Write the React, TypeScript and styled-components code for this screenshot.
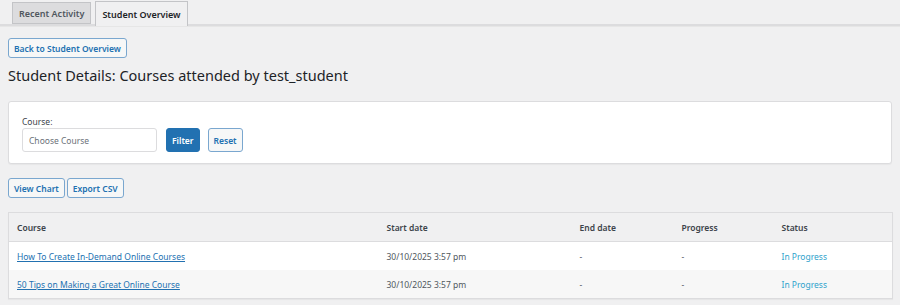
import styled, { createGlobalStyle } from "styled-components";

const GlobalStyle = createGlobalStyle`
  html, body {
    margin: 0;
    padding: 0;
    background: #f0f0f1;
  }
  body {
    font-family: "Noto Sans", "Open Sans", sans-serif;
    font-size: 8.5px;
    color: #3c434a;
  }
`;

const courses = [
  { title: "How To Create In-Demand Online Courses", start: "30/10/2025 3:57 pm" },
  { title: "50 Tips on Making a Great Online Course", start: "30/10/2025 3:57 pm" },
];

export default function App() {
  return (
    <>
      <GlobalStyle />
      <Page>
        <TabBar>
          <Tab>Recent Activity</Tab>
          <Tab $active>Student Overview</Tab>
        </TabBar>

        <Content>
          <div>
            <OutlineButton>Back to Student Overview</OutlineButton>
          </div>
          <Heading>Student Details: Courses attended by test_student</Heading>

          <Card>
            <Label>Course:</Label>
            <FilterRow>
              <Select>Choose Course</Select>
              <PrimaryButton>Filter</PrimaryButton>
              <OutlineButton $tall>Reset</OutlineButton>
            </FilterRow>
          </Card>

          <Actions>
            <OutlineButton>View Chart</OutlineButton>
            <OutlineButton>Export CSV</OutlineButton>
          </Actions>

          <Table>
            <colgroup>
              <col style={{ width: 370 }} />
              <col style={{ width: 193 }} />
              <col style={{ width: 102 }} />
              <col style={{ width: 100 }} />
              <col />
            </colgroup>
            <thead>
              <tr>
                <Th>Course</Th>
                <Th>Start date</Th>
                <Th>End date</Th>
                <Th>Progress</Th>
                <Th>Status</Th>
              </tr>
            </thead>
            <tbody>
              {courses.map((c, i) => (
                <Row key={c.title} $striped={i % 2 === 1}>
                  <Td>
                    <CourseLink href="#">{c.title}</CourseLink>
                  </Td>
                  <Td>{c.start}</Td>
                  <Td>-</Td>
                  <Td>-</Td>
                  <Td>
                    <Status>In Progress</Status>
                  </Td>
                </Row>
              ))}
            </tbody>
          </Table>
        </Content>
      </Page>
    </>
  );
}

const Page = styled.div`
  width: 900px;
  height: 305px;
  overflow: hidden;
`;

const TabBar = styled.div`
  display: flex;
  align-items: flex-end;
  gap: 4px;
  height: 24px;
  padding-left: 12px;
  border-bottom: 2px solid #dcdcde;
  box-shadow: 0 1px 0 #e6e6e6;
`;

const Tab = styled.div<{ $active?: boolean }>`
  box-sizing: border-box;
  height: ${(p) => (p.$active ? "25px" : "22px")};
  margin-bottom: ${(p) => (p.$active ? "-2px" : "0")};
  padding: 0 6px;
  display: flex;
  align-items: center;
  font-size: 9px;
  font-weight: 600;
  color: ${(p) => (p.$active ? "#1d2327" : "#50575e")};
  background: ${(p) => (p.$active ? "#f0f0f1" : "#dcdcde")};
  border: 1px solid #c3c4c7;
  border-bottom: ${(p) => (p.$active ? "none" : "1px solid #c3c4c7")};
`;

const Content = styled.div`
  padding: 12px 8px 0 8px;
  display: flex;
  flex-direction: column;
  align-items: stretch;
`;

const OutlineButton = styled.button<{ $tall?: boolean }>`
  box-sizing: border-box;
  height: ${(p) => (p.$tall ? "24px" : "20px")};
  padding: 0 5px;
  font-family: inherit;
  font-size: 8.5px;
  font-weight: 600;
  color: #2271b1;
  background: #f6f7f7;
  border: 1px solid #7aa7cf;
  border-radius: 3px;
  cursor: pointer;
`;

const PrimaryButton = styled.button`
  box-sizing: border-box;
  height: 24px;
  padding: 0 5px;
  font-family: inherit;
  font-size: 8.5px;
  font-weight: 600;
  color: #fff;
  background: #2271b1;
  border: 1px solid #2271b1;
  border-radius: 3px;
`;

const Heading = styled.h1`
  margin: 7px 0 16px;
  font-size: 14.5px;
  font-weight: 400;
  line-height: 20px;
  color: #1d2327;
`;

const Card = styled.div`
  box-sizing: border-box;
  height: 63px;
  padding: 14px 13px;
  background: #fff;
  border: 1px solid #dcdcde;
  border-radius: 3px;
  box-shadow: 0 1px 1px rgba(0, 0, 0, 0.04);
`;

const Label = styled.div`
  line-height: 12px;
  color: #3c434a;
`;

const FilterRow = styled.div`
  display: flex;
  align-items: center;
  gap: 8px;
`;

const Select = styled.div`
  box-sizing: border-box;
  width: 135px;
  height: 24px;
  margin-right: 1px;
  padding: 0 6px;
  display: flex;
  align-items: center;
  color: #6b7178;
  border: 1px solid #dcdcde;
  border-radius: 3px;
`;

const Actions = styled.div`
  display: flex;
  gap: 2px;
  margin: 14px 0 14px;
`;

const Table = styled.table`
  width: 885px;
  border-collapse: collapse;
  table-layout: fixed;
  background: #fff;
  border: 1px solid #dcdcde;
  box-shadow: 0 1px 1px rgba(0, 0, 0, 0.04);
`;

const Th = styled.th`
  height: 28px;
  padding: 0 8px;
  text-align: left;
  font-weight: 600;
  color: #3c434a;
  background: #f0f0f1;
  border-bottom: 1px solid #dcdcde;
`;

const Row = styled.tr<{ $striped?: boolean }>`
  background: ${(p) => (p.$striped ? "#f7f7f7" : "#fff")};
  & + & td {
    border-top: 1px solid #e5e5e5;
  }
`;

const Td = styled.td`
  height: 28px;
  padding: 0 8px;
  color: #50575e;
`;

const CourseLink = styled.a`
  color: #2271b1;
  text-decoration: underline;
`;

const Status = styled.span`
  color: #2ea2cc;
`;
